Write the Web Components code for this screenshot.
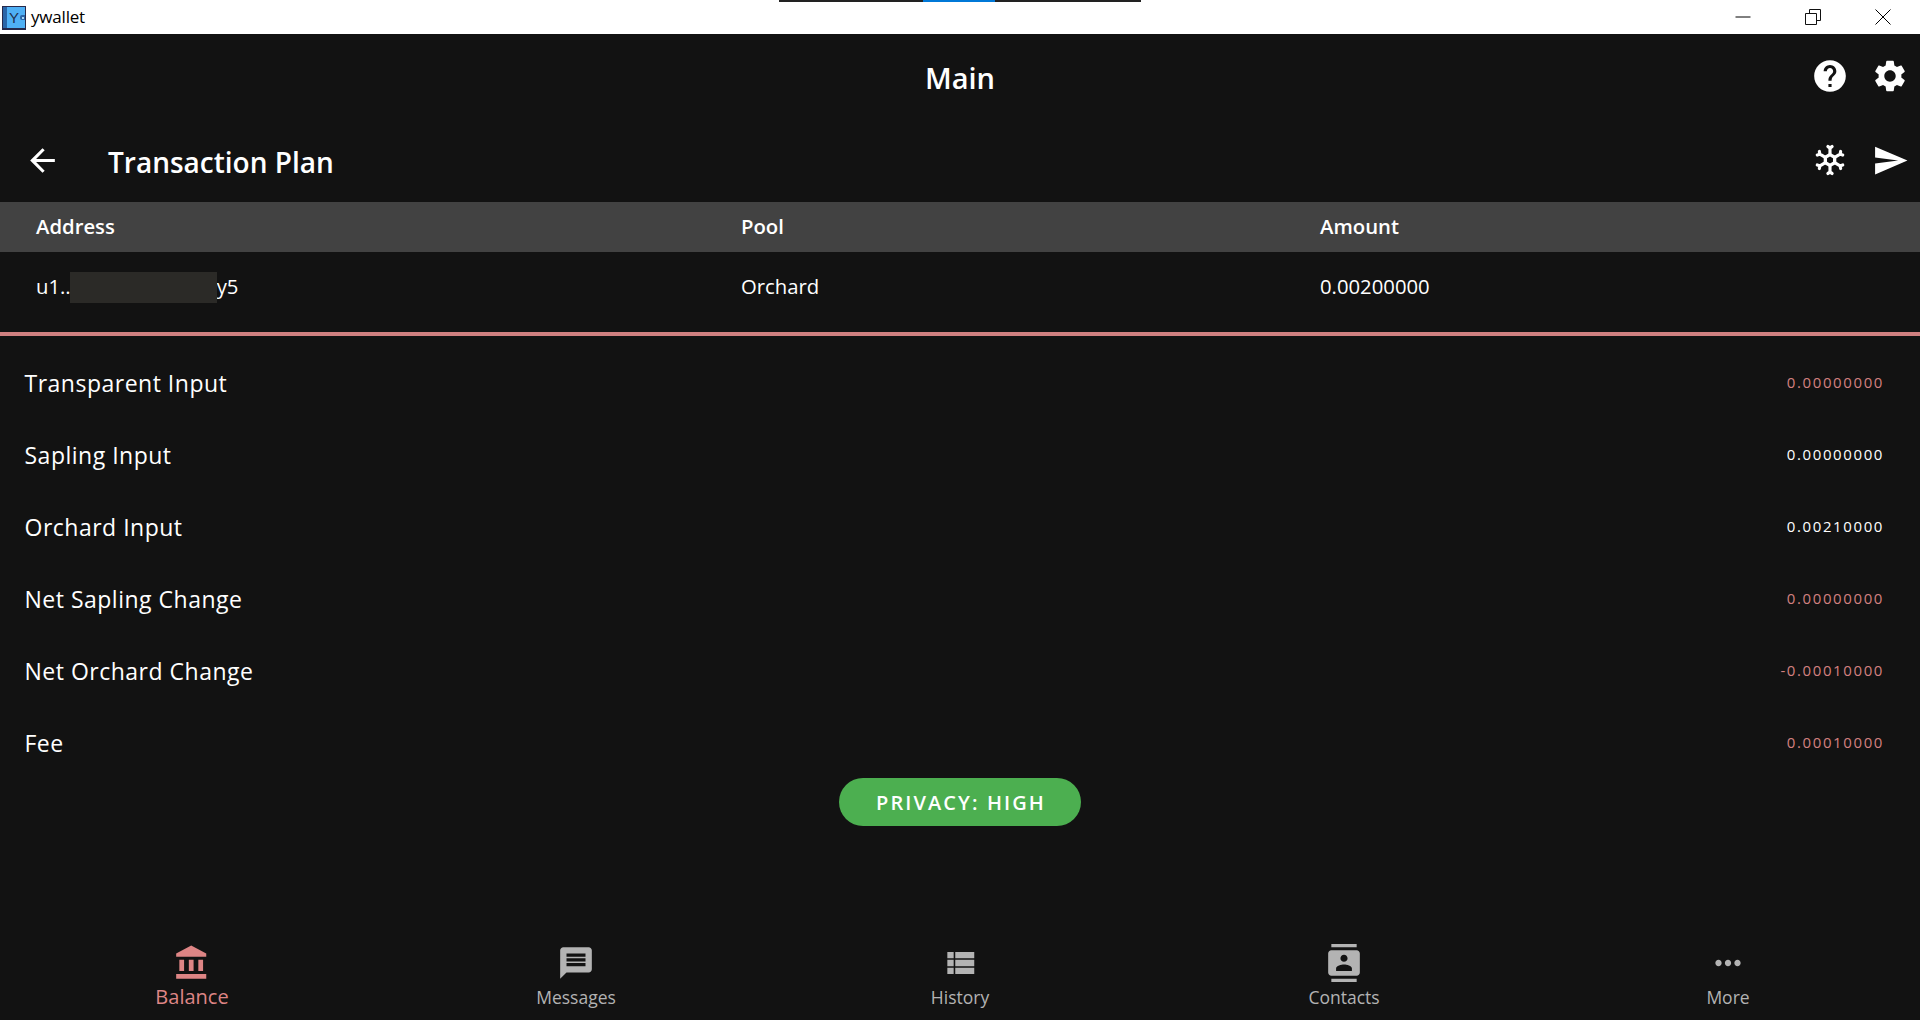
<!DOCTYPE html>
<html>
<head>
<meta charset="utf-8">
<title>ywallet</title>
<style>
  html, body { margin: 0; height: 100%; background: #121212; }
  body { font-family: "Open Sans", "Noto Sans", sans-serif; overflow: hidden; }
  app-shell { height: 1020px; }
</style>
</head>
<body>
<app-shell>
  <win-titlebar title="ywallet"></win-titlebar>
  <main-header title="Main"></main-header>
  <plan-header title="Transaction Plan"></plan-header>
  <plan-table></plan-table>
  <summary-row label="Transparent Input" value="0.00000000" tone="warn"></summary-row>
  <summary-row label="Sapling Input" value="0.00000000"></summary-row>
  <summary-row label="Orchard Input" value="0.00210000"></summary-row>
  <summary-row label="Net Sapling Change" value="0.00000000" tone="warn"></summary-row>
  <summary-row label="Net Orchard Change" value="-0.00010000" tone="warn"></summary-row>
  <summary-row label="Fee" value="0.00010000" tone="warn"></summary-row>
  <privacy-chip>PRIVACY: HIGH</privacy-chip>
  <bottom-nav>
    <nav-item icon="balance" active>Balance</nav-item>
    <nav-item icon="messages">Messages</nav-item>
    <nav-item icon="history">History</nav-item>
    <nav-item icon="contacts">Contacts</nav-item>
    <nav-item icon="more">More</nav-item>
  </bottom-nav>
</app-shell>

<script>
const ICONS = {
  back: '<path d="M20 11H7.83l5.59-5.59L12 4l-8 8 8 8 1.41-1.41L7.83 13H20v-2z"/>',
  help: '<path d="M12 2C6.48 2 2 6.48 2 12s4.48 10 10 10 10-4.48 10-10S17.52 2 12 2zm1 17h-2v-2h2v2zm2.07-7.75l-.9.92C13.45 12.9 13 13.5 13 15h-2v-.5c0-1.1.45-2.1 1.17-2.83l1.24-1.26c.37-.36.59-.86.59-1.41 0-1.1-.9-2-2-2s-2 .9-2 2H8c0-2.21 1.79-4 4-4s4 1.79 4 4c0 .88-.36 1.68-.93 2.25z"/>',
  settings: '<path d="M19.14 12.94c.04-.3.06-.61.06-.94 0-.32-.02-.64-.07-.94l2.03-1.58c.18-.14.23-.41.12-.61l-1.92-3.32c-.12-.22-.37-.29-.59-.22l-2.39.96c-.5-.38-1.03-.7-1.62-.94l-.36-2.54c-.04-.24-.24-.41-.48-.41h-3.84c-.24 0-.43.17-.47.41l-.36 2.54c-.59.24-1.13.57-1.62.94l-2.39-.96c-.22-.08-.47 0-.59.22L2.74 8.87c-.12.21-.08.47.12.61l2.03 1.58c-.05.3-.09.63-.09.94s.02.64.07.94l-2.03 1.58c-.18.14-.23.41-.12.61l1.92 3.32c.12.22.37.29.59.22l2.39-.96c.5.38 1.03.7 1.62.94l.36 2.54c.05.24.24.41.48.41h3.84c.24 0 .44-.17.47-.41l.36-2.54c.59-.24 1.13-.56 1.62-.94l2.39.96c.22.08.47 0 .59-.22l1.92-3.32c.12-.22.07-.47-.12-.61l-2.01-1.58zM12 15.6c-1.98 0-3.6-1.62-3.6-3.6s1.62-3.6 3.6-3.6 3.6 1.62 3.6 3.6-1.62 3.6-3.6 3.6z"/>',
  send: '<path d="M2.01 21L23 12 2.01 3 2 10l15 2-15 2z"/>',
  snow: '<g fill="none" stroke="currentColor" stroke-width="2.5" stroke-linecap="round">' +
    '<path d="M12 8.4l3.1 1.8v3.6L12 15.6l-3.1-1.8v-3.6z" stroke-width="2.2"/>' +
    [0, 60, 120, 180, 240, 300].map(a => `<g transform="rotate(${a} 12 12)"><path d="M12 8.4V3.6M10.6 3l1.4 1.2L13.4 3" stroke-width="2.1"/></g>`).join('') +
    '</g>',
  balance: '<path d="M4 10v7h3v-7H4zm6 0v7h3v-7h-3zM2 22h19v-3H2v3zm14-12v7h3v-7h-3zm-4.5-9L2 6v2h19V6l-9.5-5z"/>',
  messages: '<path d="M20 2H4c-1.1 0-1.99.9-1.99 2L2 22l4-4h14c1.1 0 2-.9 2-2V4c0-1.1-.9-2-2-2zm-2 12H6v-2h12v2zm0-3H6V9h12v2zm0-3H6V6h12v2z"/>',
  history: '<path d="M4 14h4v-4H4v4zm0 5h4v-4H4v4zM4 9h4V5H4v4zm5 5h12v-4H9v4zm0 5h12v-4H9v4zM9 5v4h12V5H9z"/>',
  contacts: '<path d="M20 0H4v2h16V0zM4 24h16v-2H4v2zM20 4H4c-1.1 0-2 .9-2 2v12c0 1.1.9 2 2 2h16c1.1 0 2-.9 2-2V6c0-1.1-.9-2-2-2zm-8 2.75c1.24 0 2.25 1.01 2.25 2.25s-1.01 2.25-2.25 2.25S9.75 10.24 9.75 9 10.76 6.75 12 6.75zM17 17H7v-1.5c0-1.67 3.33-2.5 5-2.5s5 .83 5 2.5V17z"/>',
  more: '<path d="M6 10c-1.1 0-2 .9-2 2s.9 2 2 2 2-.9 2-2-.9-2-2-2zm12 0c-1.1 0-2 .9-2 2s.9 2 2 2 2-.9 2-2-.9-2-2-2zm-6 0c-1.1 0-2 .9-2 2s.9 2 2 2 2-.9 2-2-.9-2-2-2z"/>'
};

class BaseEl extends HTMLElement {
  constructor(html) {
    super();
    this.attachShadow({ mode: 'open' }).innerHTML = html;
  }
}

function iconSvg(name, size) {
  return `<svg width="${size}" height="${size}" viewBox="0 0 24 24" fill="currentColor" style="display:block">${ICONS[name]}</svg>`;
}

class AppShell extends BaseEl {
  constructor() {
    super(`<style>:host { display: flex; flex-direction: column; width: 1920px; background: #121212; color: #fff; }</style><slot></slot>`);
  }
}

class WinTitlebar extends BaseEl {
  constructor() {
    super(`
      <style>
        :host { display: flex; align-items: center; height: 34px; background: #fff; color: #000; position: relative; flex: none; }
        .logo { width: 24px; height: 24px; margin: 1px 0 0 2px; background: #27294a; display: flex; box-sizing: border-box; padding: 1px 1px 2px 1px; position: relative; }
        .logo i { width: 4px; background: #2a66a8; }
        .logo b { flex: 1; background: #4fb0f5; color: #22304f; font: 400 15px/21px "Liberation Sans", sans-serif; padding-left: 2px; }
        .logo u { position: absolute; right: 1px; top: 9px; width: 5px; height: 5px; background: #2a66a8; border-radius: 2px 0 0 2px; }
        .logo u::after { content: ""; position: absolute; left: 2px; top: 2px; width: 2px; height: 2px; background: #a8d8fa; }
        .name { margin-left: 5px; font: 17px/34px "Open Sans", sans-serif; letter-spacing: -.2px; }
        .progress { position: absolute; left: 779px; top: 0; width: 362px; height: 2px; background: #222; }
        .progress i { position: absolute; left: 144px; width: 72px; height: 2px; background: #0078d7; }
        .btns { margin-left: auto; display: flex; padding-right: 2px; }
        .btns div { width: 70px; height: 34px; display: flex; align-items: center; justify-content: center; }
        svg { display: block; }
      </style>
      <div class="logo"><i></i><b>Y</b><u></u></div>
      <span class="name"></span>
      <div class="progress"><i></i></div>
      <div class="btns">
        <div><svg width="16" height="16" viewBox="0 0 16 16"><path d="M.5 8h15" stroke="#000"/></svg></div>
        <div><svg width="16" height="16" viewBox="0 0 16 16" fill="none" stroke="#111"><path d="M.5 4.5h11v11H.5zM4.5 4.5V.5h11v11h-4"/></svg></div>
        <div><svg width="16" height="16" viewBox="0 0 16 16" stroke="#000"><path d="M.5.5l15 15M15.5.5l-15 15"/></svg></div>
      </div>`);
  }
  connectedCallback() { this.shadowRoot.querySelector('.name').textContent = this.getAttribute('title'); }
}

class MainHeader extends BaseEl {
  constructor() {
    super(`
      <style>
        :host { display: flex; align-items: center; justify-content: center; height: 91px; position: relative; flex: none; }
        h1 { margin: 0; font-size: 29px; font-weight: 600; line-height: 34px; padding-bottom: 4px; }
        .acts { position: absolute; right: 0; top: 0; display: flex; gap: 22px; padding: 23px 11px 0 0; }
      </style>
      <h1></h1>
      <div class="acts">${iconSvg('help', 38)}${iconSvg('settings', 38)}</div>`);
  }
  connectedCallback() { this.shadowRoot.querySelector('h1').textContent = this.getAttribute('title'); }
}

class PlanHeader extends BaseEl {
  constructor() {
    super(`
      <style>
        :host { display: flex; align-items: center; height: 77px; flex: none; padding-left: 24px; padding-right: 11px; box-sizing: border-box; }
        .back { margin-top: -6px; }
        h2 { margin: 0 0 0 47px; font-size: 28px; font-weight: 600; line-height: 36px; flex: 1; padding-bottom: 3px; }
        .acts { display: flex; gap: 24px; margin-top: -6px; }
      </style>
      <div class="back">${iconSvg('back', 37)}</div>
      <h2></h2>
      <div class="acts">${iconSvg('snow', 36)}${iconSvg('send', 37)}</div>`);
  }
  connectedCallback() { this.shadowRoot.querySelector('h2').textContent = this.getAttribute('title'); }
}

class PlanTable extends BaseEl {
  constructor() {
    super(`
      <style>
        :host { display: block; flex: none; font-size: 20.3px; border-bottom: 4px solid #cf8080; margin-bottom: 10px; }
        .row { display: grid; grid-template-columns: 705px 579px 1fr; padding-left: 36px; align-items: center; }
        .head { height: 50px; background: #424242; font-weight: 600; padding-bottom: 2px; box-sizing: border-box; }
        .body { height: 80px; padding-bottom: 12px; box-sizing: border-box; }
        .addr { display: flex; align-items: center; }
        .mask { width: 147px; height: 31px; background: #2b2a27; margin: 2px 0 0 -1px; position: relative; }
      </style>
      <div class="row head"><span>Address</span><span>Pool</span><span>Amount</span></div>
      <div class="row body"><span class="addr"><span>u1..</span><span class="mask"></span><span>y5</span></span><span>Orchard</span><span>0.00200000</span></div>`);
  }
}

class SummaryRow extends BaseEl {
  constructor() {
    super(`
      <style>
        :host { display: flex; align-items: center; justify-content: space-between; height: 72px; padding: 0 36px 0 24.5px; flex: none; }
        .l { font-size: 23px; letter-spacing: .5px; position: relative; top: 1px; }
        .v { font-size: 15px; letter-spacing: 1.6px; }
        :host([tone="warn"]) .v { color: #d28080; }
      </style>
      <span class="l"></span><span class="v"></span>`);
  }
  connectedCallback() {
    this.shadowRoot.querySelector('.l').textContent = this.getAttribute('label');
    this.shadowRoot.querySelector('.v').textContent = this.getAttribute('value');
  }
}

class PrivacyChip extends BaseEl {
  constructor() {
    super(`
      <style>
        :host { display: flex; justify-content: center; flex: none; }
        div { width: 242px; height: 48px; border-radius: 24px; background: #4caf50; color: #fff; display: flex; align-items: center; justify-content: center; font-size: 20px; font-weight: 600; letter-spacing: 2.1px; padding-left: 2px; box-sizing: border-box; }
      </style>
      <div><slot></slot></div>`);
  }
}

class BottomNav extends BaseEl {
  constructor() {
    super(`<style>:host { display: grid; grid-template-columns: repeat(5, 1fr); margin-top: auto; height: 80px; flex: none; }</style><slot></slot>`);
  }
}

class NavItem extends BaseEl {
  constructor() {
    super(`
      <style>
        :host { display: flex; flex-direction: column; align-items: center; color: #b3b3b3; font-size: 17.5px; }
        :host([active]) { color: #de8585; font-size: 20px; }
        .i { margin-top: 4px; }
        .t { line-height: 24px; margin-top: 3px; }
      </style>
      <div class="i"></div><span class="t"><slot></slot></span>`);
  }
  connectedCallback() {
    this.shadowRoot.querySelector('.i').innerHTML = iconSvg(this.getAttribute('icon'), 38);
  }
}

customElements.define('app-shell', AppShell);
customElements.define('win-titlebar', WinTitlebar);
customElements.define('main-header', MainHeader);
customElements.define('plan-header', PlanHeader);
customElements.define('plan-table', PlanTable);
customElements.define('summary-row', SummaryRow);
customElements.define('privacy-chip', PrivacyChip);
customElements.define('bottom-nav', BottomNav);
customElements.define('nav-item', NavItem);
</script>
</body>
</html>
